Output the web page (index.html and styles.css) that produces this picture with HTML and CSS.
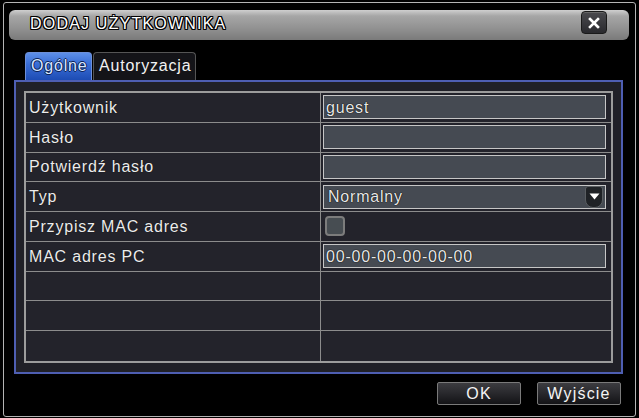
FILE: index.html
```html
<!DOCTYPE html>
<html lang="pl">
<head>
<meta charset="utf-8">
<title>Dodaj użytkownika</title>
<link rel="stylesheet" href="styles.css">
</head>
<body>
<div class="window">
  <div class="titlebar">
    <span class="title">DODAJ UŻYTKOWNIKA</span>
    <span class="close">
      <svg width="12" height="12" viewBox="0 0 12 12"><path d="M2 2 L10 10 M10 2 L2 10" stroke="#fff" stroke-width="2.6" stroke-linecap="square"/></svg>
    </span>
  </div>
  <div class="tabs">
    <div class="tab active">Ogólne</div>
    <div class="tab">Autoryzacja</div>
  </div>
  <div class="panel">
    <div class="table">
      <div class="cell label">Użytkownik</div>
      <div class="cell value"><div class="field">guest</div></div>
      <div class="cell label">Hasło</div>
      <div class="cell value"><div class="field"></div></div>
      <div class="cell label">Potwierdź hasło</div>
      <div class="cell value"><div class="field"></div></div>
      <div class="cell label">Typ</div>
      <div class="cell value"><div class="field select"><span>Normalny</span><span class="arrow"><svg width="11" height="7" viewBox="0 0 11 7"><path d="M0.5 0.5 L10.5 0.5 L5.5 6.5 Z" fill="#fff"/></svg></span></div></div>
      <div class="cell label">Przypisz MAC adres</div>
      <div class="cell value"><span class="check"></span></div>
      <div class="cell label">MAC adres PC</div>
      <div class="cell value"><div class="field">00-00-00-00-00-00</div></div>
      <div class="cell label"></div>
      <div class="cell value"></div>
      <div class="cell label"></div>
      <div class="cell value"></div>
      <div class="cell label last"></div>
      <div class="cell value last"></div>
    </div>
  </div>
  <div class="buttons">
    <div class="btn">OK</div>
    <div class="btn">Wyjście</div>
  </div>
</div>
</body>
</html>
```
FILE: styles.css
```css
* { box-sizing: border-box; }
html, body {
  margin: 0;
  padding: 0;
  background: #000;
  width: 639px;
  height: 418px;
  overflow: hidden;
}
body {
  font-family: "Liberation Sans", Arial, sans-serif;
  font-size: 16px;
  letter-spacing: 0.8px;
  color: #e6e6e6;
  padding: 2px 3px 0 3px;
}
.window {
  width: 633px;
  height: 415px;
  border: 1px solid #b4b4b4;
  border-radius: 3px;
  background: #000;
  display: flex;
  flex-direction: column;
}
.titlebar {
  margin: 7px 6px 0 5px;
  height: 30px;
  border-radius: 6px;
  background: linear-gradient(#cfcfcf 0%, #a6a6a6 20%, #929292 60%, #7a7a7a 100%);
  display: flex;
  align-items: flex-start;
  justify-content: space-between;
  padding: 0 22px 0 21px;
}
.title {
  margin-top: 5px;
  color: #fff;
  font-size: 16px;
  letter-spacing: 1.2px;
  text-shadow: -1px 0 #000, 1px 0 #000, 0 -1px #000, 0 1px #000, 1px 1px #000, -1px -1px #000, 1px -1px #000, -1px 1px #000;
}
.close {
  margin-top: 1px;
  width: 26px;
  height: 23px;
  border-radius: 4px;
  background: linear-gradient(#4a4a4e, #2a2a2e);
  border: 1px solid #1a1a1a;
  box-shadow: inset 0 1px 0 #666;
  display: flex;
  align-items: center;
  justify-content: center;
}
.tabs {
  margin: 12px 0 0 21px;
  display: flex;
  height: 28px;
}
.tab {
  height: 28px;
  padding: 4px 4px 0 5px;
  border-radius: 4px 4px 0 0;
  background: #141418;
  border: 1px solid #555;
  border-bottom: none;
  color: #f2f2f2;
  margin-left: 1px;
}
.tab.active {
  margin-left: 0;
  width: 67px;
  background: linear-gradient(#5d8fe8 0%, #3a6ed6 40%, #1d4cb4 100%);
  border-color: #6d8fd8;
  color: #d8e6ff;
  text-shadow: -1px 0 #0c2256, 1px 0 #0c2256, 0 -1px #0c2256, 0 1px #0c2256;
}
.panel {
  margin-left: 10px;
  width: 609px;
  height: 294px;
  border: 2px solid #4e5eb2;
  background: #202027;
  padding: 9px 8px 0 8px;
}
.table {
  width: 589px;
  height: 272px;
  border: 2px solid #9c9c9c;
  background: #23232b;
  display: grid;
  grid-template-columns: 295px 1fr;
  grid-template-rows: repeat(9, 1fr);
}
.cell {
  border-bottom: 1px solid #8c8c8c;
  display: flex;
  align-items: center;
}
.cell.last { border-bottom: none; }
.label {
  border-right: 1px solid #8c8c8c;
  padding-left: 3px;
  padding-top: 1px;
  color: #ececec;
  text-shadow: 0 0 1px #000;
}
.value {
  padding-left: 2px;
  padding-right: 5px;
}
.field {
  width: 283px;
  height: 24px;
  border: 1px solid #c6c6c6;
  background: #454a52;
  color: #e8e8e8;
  padding-left: 2px;
  padding-top: 1px;
  display: flex;
  align-items: center;
  justify-content: space-between;
  text-shadow: 0 0 1px #000, 0 0 1px #000;
}
.select { padding-left: 4px; padding-right: 2px; padding-top: 0; }
.arrow {
  width: 18px;
  height: 22px;
  border-radius: 3px 3px 8px 8px;
  background: #1f2226;
  border: 1px solid #5a5e62;
  display: flex;
  align-items: center;
  justify-content: center;
}
.check {
  margin-left: 2px;
  width: 20px;
  height: 20px;
  border: 2px solid #7c7c7c;
  border-radius: 4px;
  background: #474d52;
}
.buttons {
  display: flex;
  justify-content: flex-end;
  gap: 16px;
  margin: 8px 14px 0 0;
}
.btn {
  width: 84px;
  height: 23px;
  border: 1px solid #7a7a7a;
  border-radius: 2px;
  background: linear-gradient(#3c3c40 0%, #2a2a2e 45%, #131316 100%);
  color: #f4f4f4;
  font-size: 16px;
  letter-spacing: 1.2px;
  display: flex;
  align-items: center;
  justify-content: center;
}
```
